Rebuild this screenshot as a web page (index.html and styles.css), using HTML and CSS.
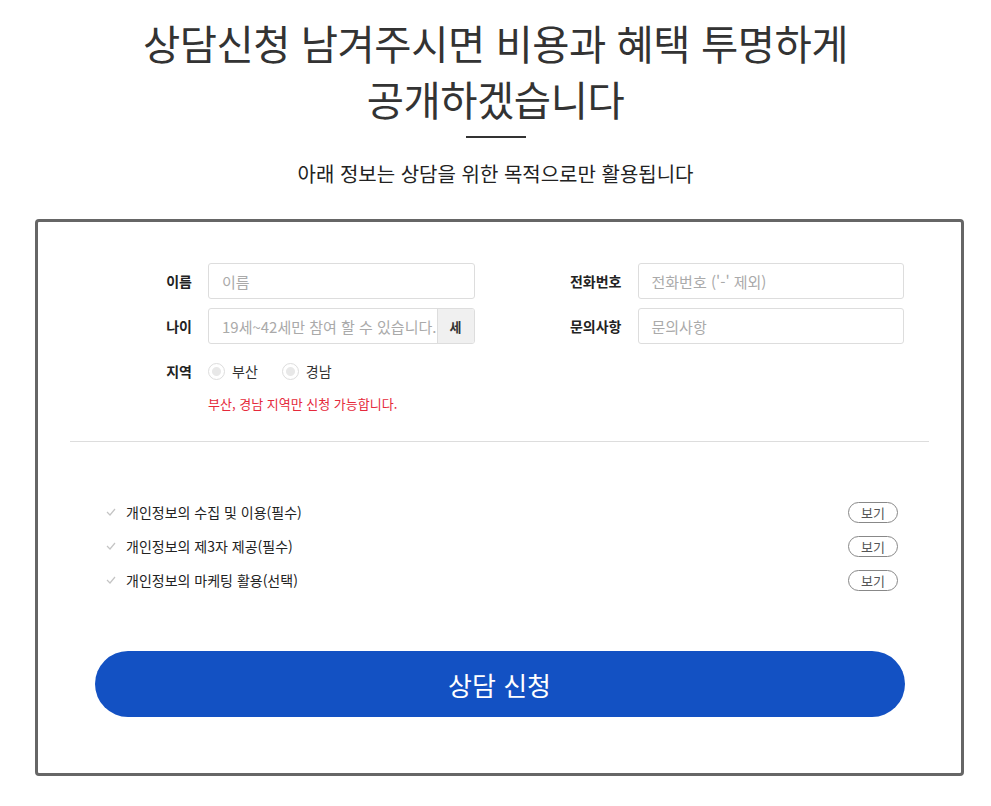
FILE: index.html
```html
<!DOCTYPE html>
<html lang="ko">
<head>
<meta charset="utf-8">
<title>상담신청</title>
<link rel="stylesheet" href="styles.css">
</head>
<body>
<header class="head">
  <h1 class="title">상담신청 남겨주시면 비용과 혜택 투명하게<br>공개하겠습니다</h1>
  <div class="bar"></div>
  <p class="sub">아래 정보는 상담을 위한 목적으로만 활용됩니다</p>
</header>
<section class="card">
  <div class="form">
    <div class="col">
      <div class="row">
        <label class="lbl">이름</label>
        <div class="field"><span class="ph">이름</span></div>
      </div>
      <div class="row">
        <label class="lbl">나이</label>
        <div class="field group"><span class="ph">19세~42세만 참여 할 수 있습니다.</span><span class="addon">세</span></div>
      </div>
      <div class="row">
        <label class="lbl">지역</label>
        <div class="radios">
          <span class="radio"><span class="dot"></span>부산</span>
          <span class="radio"><span class="dot"></span>경남</span>
        </div>
      </div>
      <div class="row note-row">
        <span class="lbl"></span>
        <p class="note">부산, 경남 지역만 신청 가능합니다.</p>
      </div>
    </div>
    <div class="col">
      <div class="row">
        <label class="lbl">전화번호</label>
        <div class="field"><span class="ph">전화번호 ('-' 제외)</span></div>
      </div>
      <div class="row">
        <label class="lbl">문의사항</label>
        <div class="field"><span class="ph">문의사항</span></div>
      </div>
    </div>
  </div>
  <hr class="sep">
  <ul class="agree">
    <li class="item"><svg class="chk" width="10" height="8" viewBox="0 0 10 8"><path d="M1 4 L4 7 L9 1" fill="none" stroke="#c4c4c4" stroke-width="1.2"/></svg><span class="itxt">개인정보의 수집 및 이용(필수)</span><button class="view">보기</button></li>
    <li class="item"><svg class="chk" width="10" height="8" viewBox="0 0 10 8"><path d="M1 4 L4 7 L9 1" fill="none" stroke="#c4c4c4" stroke-width="1.2"/></svg><span class="itxt">개인정보의 제3자 제공(필수)</span><button class="view">보기</button></li>
    <li class="item"><svg class="chk" width="10" height="8" viewBox="0 0 10 8"><path d="M1 4 L4 7 L9 1" fill="none" stroke="#c4c4c4" stroke-width="1.2"/></svg><span class="itxt">개인정보의 마케팅 활용(선택)</span><button class="view">보기</button></li>
  </ul>
  <button class="submit">상담 신청</button>
</section>
</body>
</html>
```
FILE: styles.css
```css
* { box-sizing: border-box; }
body {
  margin: 0;
  font-family: "Noto Sans CJK KR", "Noto Sans", sans-serif;
  color: #333;
  background: #fff;
}
.head {
  text-align: center;
  padding-top: 15px;
}
.title {
  margin: 0;
  font-size: 40.5px;
  font-weight: 400;
  line-height: 56px;
  color: #333;
  letter-spacing: -0.5px;
}
.bar {
  width: 60px;
  height: 2px;
  background: #333;
  margin: 9px auto 0;
}
.sub {
  margin: 22px 0 0;
  font-size: 20px;
  line-height: 28px;
  color: #222;
}
.card {
  width: 929px;
  margin: 31px 0 0 35px;
  border: 3px solid #666;
  border-radius: 4px;
  padding: 41px 32px 56px;
}
.form {
  display: grid;
  grid-template-columns: 1fr 1fr;
}
.col {
  display: flex;
  flex-direction: column;
  gap: 9px;
  padding-right: 25px;
}
.row {
  display: flex;
  align-items: center;
  gap: 16px;
}
.lbl {
  width: 122px;
  flex: none;
  text-align: right;
  font-size: 14px;
  font-weight: 700;
  color: #222;
}
.field {
  flex: 1;
  height: 36px;
  border: 1px solid #ddd;
  border-radius: 3px;
  display: flex;
  align-items: center;
  padding-left: 13px;
}
.ph {
  font-size: 15px;
  color: #aaa;
  flex: 1;
}
.group { padding-right: 0; overflow: hidden; }
.addon {
  width: 37px;
  height: 100%;
  background: #f0f0f0;
  border-left: 1px solid #ddd;
  display: flex;
  align-items: center;
  justify-content: center;
  font-size: 13px;
  font-weight: 700;
  color: #333;
}
.radios {
  display: flex;
  gap: 24px;
  height: 36px;
  align-items: center;
  font-size: 14px;
  color: #333;
}
.radio {
  display: flex;
  align-items: center;
  gap: 7px;
}
.dot {
  width: 17px;
  height: 17px;
  border: 1px solid #ddd;
  border-radius: 50%;
  background: radial-gradient(circle, #e8e8e8 0 4px, #fff 5px);
}
.note-row { margin-top: -4px; }
.note {
  margin: 0;
  font-size: 13px;
  color: #e5293b;
  line-height: 20px;
}
.sep {
  border: 0;
  border-top: 1px solid #ddd;
  margin: 27px 0 0;
}
.agree {
  list-style: none;
  margin: 53px 0 0;
  padding: 0 31px 0 36px;
}
.item {
  display: flex;
  align-items: center;
  height: 34px;
}
.chk { margin-right: 10px; }
.itxt {
  flex: 1;
  font-size: 14px;
  color: #222;
}
.view {
  width: 50px;
  height: 21px;
  border: 1px solid #888;
  border-radius: 11px;
  background: #fff;
  font-family: inherit;
  font-size: 13px;
  color: #555;
  padding: 0;
  line-height: 19px;
}
.submit {
  display: block;
  width: 810px;
  height: 66px;
  margin: 54px auto 0;
  border: 0;
  border-radius: 33px;
  background: #1351c3;
  color: #fff;
  font-family: inherit;
  font-size: 26px;
}
```
